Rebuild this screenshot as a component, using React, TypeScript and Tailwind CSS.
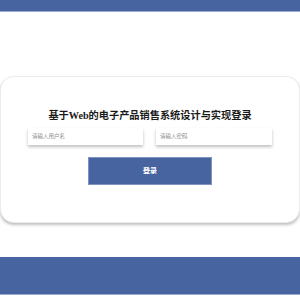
import React from "react";

export default function App() {
  return (
    <div className="w-[300px] h-[300px] bg-white flex flex-col overflow-hidden" style={{ fontFamily: '"Liberation Sans", "Noto Sans CJK SC", sans-serif' }}>
      <div className="h-[12px] shrink-0 bg-[#4763a0] border-b border-[#9aaad0]" />
      <div className="mt-[64px] h-[147px] shrink-0 bg-white rounded-[14px] border border-[#ececec] shadow-[0_2px_3px_rgba(0,0,0,0.25)] flex flex-col items-center pt-[32px]">
        <div className="text-[10.2px] leading-[14px] font-bold text-[#1a1a1a]" style={{ fontFamily: '"Liberation Serif", "Noto Sans CJK SC", serif' }}>
          基于Web的电子产品销售系统设计与实现登录
        </div>
        <div className="mt-[5px] flex gap-[13px]">
          <div className="w-[115px] h-[17px] bg-white shadow-[0_2px_3px_rgba(0,0,0,0.25)] flex items-center pl-[4px] text-[5.5px] text-[#8a8a8a]">
            请输入用户名
          </div>
          <div className="w-[116px] h-[17px] bg-white shadow-[0_2px_3px_rgba(0,0,0,0.25)] flex items-center pl-[4px] text-[5.5px] text-[#8a8a8a]">
            请输入密码
          </div>
        </div>
        <div className="mt-[12px] w-[124px] h-[28px] bg-[#4763a0] border border-[#7f92c2] flex items-center justify-center text-white text-[7px] font-bold">
          登录
        </div>
      </div>
      <div className="mt-[34px] h-[38px] shrink-0 bg-[#4763a0] border-b border-[#9aaad0]" />
    </div>
  );
}
